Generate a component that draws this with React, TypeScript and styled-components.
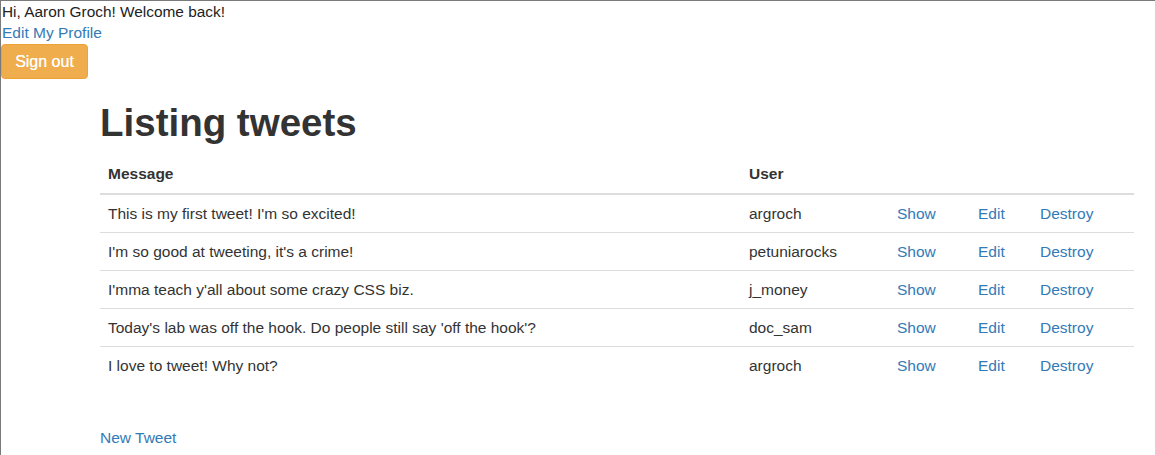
import styled, { createGlobalStyle } from 'styled-components';

const GlobalStyle = createGlobalStyle`
  html, body {
    margin: 0;
    padding: 0;
    background: #fff;
  }
  body {
    font-family: "Liberation Sans", Arial, sans-serif;
    font-size: 15.4px;
    line-height: 20px;
    color: #333;
  }
  * { box-sizing: border-box; }
`;

type Tweet = { message: string; user: string };

const tweets: Tweet[] = [
  { message: "This is my first tweet! I'm so excited!", user: 'argroch' },
  { message: "I'm so good at tweeting, it's a crime!", user: 'petuniarocks' },
  { message: "I'mma teach y'all about some crazy CSS biz.", user: 'j_money' },
  { message: "Today's lab was off the hook. Do people still say 'off the hook'?", user: 'doc_sam' },
  { message: 'I love to tweet! Why not?', user: 'argroch' },
];

const Page = styled.div`
  min-height: 455px;
  border-top: 1px solid #7a7a7a;
  border-left: 1px solid #7a7a7a;
  padding-left: 1px;
`;

const Greeting = styled.div`
  color: #222;
  line-height: 20px;
  margin-top: 1px;
`;

const Link = styled.a`
  color: #337ab7;
  text-decoration: none;
  cursor: pointer;
  &:hover { text-decoration: underline; }
`;

const ProfileLink = styled(Link)`
  display: block;
  font-size: 15.5px;
  line-height: 22px;
`;

const SignOut = styled.button`
  display: block;
  margin: 0 0 0 -1px;
  padding: 6px 12px;
  font-family: inherit;
  font-size: 16px;
  font-weight: normal;
  line-height: 21px;
  color: #fff;
  background: #f0ad4e;
  border: 1px solid #eea236;
  border-radius: 4px;
  width: 87px;
  text-shadow: 0 0 0.5px #fff;
`;

const Container = styled.div`
  padding-left: 98px;
  width: 1133px;
`;

const Title = styled.h1`
  font-size: 38.5px;
  font-weight: bold;
  line-height: 43px;
  margin: 22px 0 11px;
  color: #333;
`;

const Table = styled.table`
  width: 1034px;
  border-collapse: collapse;
  border-spacing: 0;
  font-size: 15.5px;
`;

const Th = styled.th<{ $w?: number }>`
  text-align: left;
  font-weight: bold;
  padding: 8px 8px 9px;
  line-height: 21px;
  border-bottom: 2px solid #ddd;
  width: ${(p) => (p.$w ? `${p.$w}px` : 'auto')};
`;

const Td = styled.td`
  padding: 8px;
  line-height: 21px;
  border-top: 1px solid #ddd;
  vertical-align: top;
`;

const Footer = styled.div`
  margin-top: 43px;
  font-size: 15.5px;
  line-height: 21px;
`;

export default function App() {
  return (
    <Page>
      <GlobalStyle />
      <Greeting>Hi, Aaron Groch! Welcome back!</Greeting>
      <ProfileLink>Edit My Profile</ProfileLink>
      <SignOut>Sign out</SignOut>
      <Container>
        <Title>Listing tweets</Title>
        <Table>
          <thead>
            <tr>
              <Th $w={641}>Message</Th>
              <Th $w={148}>User</Th>
              <Th $w={81}></Th>
              <Th $w={62}></Th>
              <Th $w={102}></Th>
            </tr>
          </thead>
          <tbody>
            {tweets.map((t, i) => (
              <tr key={i}>
                <Td>{t.message}</Td>
                <Td>{t.user}</Td>
                <Td><Link>Show</Link></Td>
                <Td><Link>Edit</Link></Td>
                <Td><Link>Destroy</Link></Td>
              </tr>
            ))}
          </tbody>
        </Table>
        <Footer>
          <Link>New Tweet</Link>
        </Footer>
      </Container>
    </Page>
  );
}
